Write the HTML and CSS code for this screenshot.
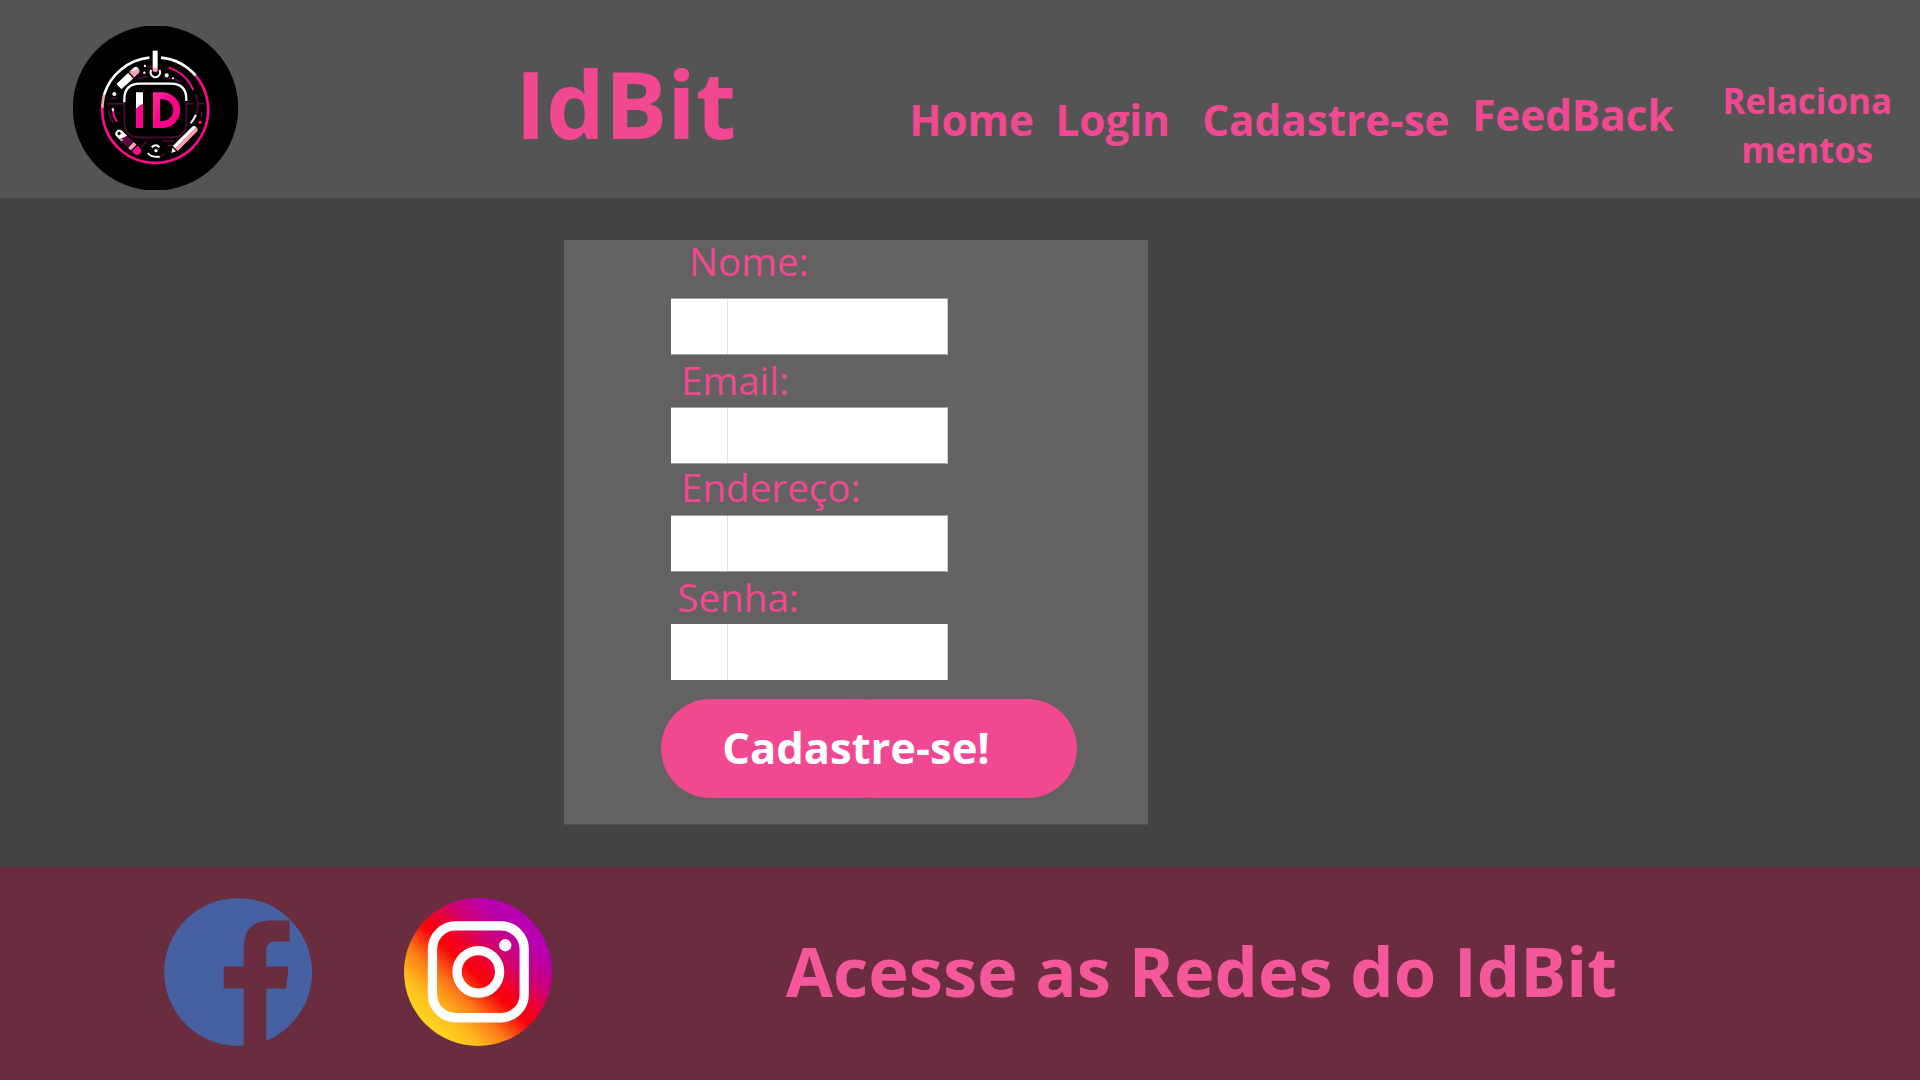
FILE: index.html
```
<!DOCTYPE html>
<html lang="pt-BR">
<head>
<meta charset="utf-8">
<title>IdBit</title>
<link rel="stylesheet" href="styles.css">
</head>
<body>
<header class="header">
  <svg class="logo" viewBox="39 33 495 495" aria-label="Logo IdBit">
    <defs>
      <linearGradient id="dee" x1="0" y1="0" x2="1" y2="1"><stop offset="0" stop-color="#ff2a9b"/><stop offset=".5" stop-color="#ff0088"/></linearGradient>
      <clipPath id="disc"><rect x="39" y="33" width="495" height="492"/></clipPath>
    </defs>
    <circle cx="286.500" cy="279" r="248" clip-path="url(#disc)"/>
    <g fill="none" stroke-width="8">
      <path d="M303 128A159 159 0 0 1 407 182" stroke="#fff"/>
      <path d="M407 182A159 159 0 1 1 127 275" stroke="#ff0a8c"/>
      <path d="M268 128A159 159 0 0 0 132 240" stroke="#fff"/>
      <path d="M132 240Q128 258 127 278" stroke="#ff9fb4"/>
      <path d="M326 158Q377 174 400 225" stroke="#ff0a8c" stroke-width="6"/>
      <path d="M159 278Q158 302 171 320" stroke="#ff0a8c" stroke-width="6"/>
      <path d="M157 280l3 8" stroke="#fff" stroke-width="6"/>
      <path d="M408 299Q403 312 392 325" stroke="#fff" stroke-width="6"/>
    </g>
    <g fill="none" stroke="#4a0c35" stroke-width="5">
      <path d="M193 262v58q0 47 47 47h92q47 0 47-47v-58M140 266h51M381 266h19M413 266h19M146 283q2 25 13 40M407 238q9 22 5 46q0 12-6 14M232 192q14-8 32-5M310 187q28 0 54 14M276 155h-15M152 250h20M156 237h8M308 378h32M322 391h16M245 395l16-16M293 428q16-2 20-13M425 292v16"/>
    </g>
    <path d="M193 262v-9q0-47 47-47h92q47 0 47 47v5" fill="none" stroke="#fff" stroke-width="7"/>
    <path d="M278 107h15v52h-15z" fill="#fff"/>
    <path d="M278 158h15v10q-7 6-15 0z" fill="#ff9fb4"/>
    <path d="M274 165a14 14 0 1 0 24 0" fill="none" stroke="#fff" stroke-width="6"/>
    <path d="M228 232h21v34l-21 16z" fill="#fff"/>
    <path d="M228 281q9-11 21-14v72h-21z" fill="#ff0088"/>
    <path d="M279 232h28a53.500 53.500 0 0 1 0 107h-28zM300 253v65h7a32.500 32.500 0 0 0 0-65z" fill="url(#dee)" fill-rule="evenodd"/>
    <g transform="translate(206 189) rotate(-43)">
      <path d="M-39-9q0-3 3-3h45v22h-45q-3 0-3-3z" fill="#fff"/>
      <path d="M13-12h16q12 0 12 11t-12 11h-16z" fill="#ff9fb4"/>
      <path d="M18-12h12q11 0 11 11l-14-3z" fill="#fff"/>
    </g>
    <g transform="translate(204 381) rotate(44)">
      <path d="M-15-12h-20q-13 0-13 12t13 12h20z" fill="#fff"/>
      <circle cx="-37" cy="0" r="5"/>
      <path d="M-15-12h25v24h-34z" fill="#5c0b41"/>
      <path d="M-15 3v9h-9z" fill="#ff9fb4"/>
      <path d="M12-12h12v24h-12z" fill="#ff9fb4"/>
      <path d="M28-12h10q12 0 12 12t-12 12h-10z" fill="#ff0a8c"/>
    </g>
    <g transform="translate(373 374) rotate(-45)">
      <path d="M-38-11h80q10 0 10 10h-90z" fill="#fff"/>
      <path d="M-38-1h90q0 11-10 11h-80z" fill="#ff9fb4"/>
      <path d="M-42-8v15l-14-6z" fill="#fff"/>
    </g>
    <path d="M275 397q13-12 23 0M263 414q11 14 36 11" fill="none" stroke="#fff" stroke-width="6"/>
    <g fill="#fff"><circle cx="288" cy="407" r="5"/><circle cx="163" cy="237" r="6"/><circle cx="320" cy="181" r="6"/><circle cx="339" cy="190" r="3"/><circle cx="255" cy="153" r="3.500"/><circle cx="253" cy="173" r="3.500"/></g>
    <circle cx="420" cy="322" r="5" fill="#ff0a8c"/>
  </svg>
  <h1 class="brand">IdBit</h1>
  <nav class="nav">
    <a class="link link-home">Home</a>
    <a class="link link-login">Login</a>
    <a class="link link-signup">Cadastre-se</a>
    <a class="link link-feedback">FeedBack</a>
    <a class="link link-relations">Relaciona<br>mentos</a>
  </nav>
</header>

<main class="main">
  <form class="card">
    <label class="label label-name">Nome:</label>
    <div class="field"><span class="field-start"></span></div>
    <label class="label label-email">Email:</label>
    <div class="field"><span class="field-start"></span></div>
    <label class="label label-address">Endereço:</label>
    <div class="field"><span class="field-start"></span></div>
    <label class="label label-password">Senha:</label>
    <div class="field field-last"><span class="field-start"></span></div>
    <button class="submit" type="button"><span class="submit-text">Cadastre-se!</span></button>
  </form>
</main>

<footer class="footer">
  <svg class="social" viewBox="42 53 444 445" aria-label="Facebook">
    <path fill="#4561a1" d="M281 497.500H252A222 222 0 0 1 42 275.500A222 222 0 0 1 264 53.500A222 222 0 0 1 419 116V121H356Q281 124 281 205V259H221V325H281ZM349 482V325H409L416 259H349V211Q349 184 378 184H419V117A222 222 0 0 1 349 482Z"/>
  </svg>
  <svg class="social social-instagram" viewBox="42 53 444 445" aria-label="Instagram">
    <defs>
      <linearGradient id="insta" gradientUnits="userSpaceOnUse" x1="115" y1="430" x2="405" y2="125">
        <stop offset="0" stop-color="#ffd41f"/><stop offset=".13" stop-color="#ffbd1e"/><stop offset=".3" stop-color="#fb7a18"/><stop offset=".48" stop-color="#f8040a"/><stop offset=".56" stop-color="#f5001c"/><stop offset=".72" stop-color="#d2006f"/><stop offset=".9" stop-color="#b900ac"/><stop offset="1" stop-color="#b800b3"/>
      </linearGradient>
    </defs>
    <circle cx="264" cy="275.500" r="222.500" fill="url(#insta)"/>
    <g fill="none" stroke="#fff" stroke-width="28"><rect x="127" y="137" width="276" height="276" rx="70"/><circle cx="265" cy="275" r="64"/></g>
    <circle cx="346" cy="195" r="18.500" fill="#fff"/>
  </svg>
  <p class="tagline">Acesse as Redes do IdBit</p>
</footer>
</body>
</html>
```
FILE: styles.css
```
* { box-sizing: border-box; }

body {
  margin: 0;
  width: 1920px;
  height: 1080px;
  overflow: hidden;
  display: flex;
  flex-direction: column;
  background: #444242;
  color: #f04991;
  font-family: "Open Sans", sans-serif;
}

/* Header */
.header {
  display: flex;
  align-items: flex-start;
  height: 198px;
  padding-left: 73px;
  background: #545454;
}
.logo {
  width: 165px;
  height: 165px;
  margin-top: 26px;
}
.brand {
  width: 394px;
  margin: 53px 0 0 277.200px;
  font-size: 93px;
  line-height: 100px;
  font-weight: 700;
}
.nav {
  display: flex;
  align-items: flex-start;
  padding-top: 90px;
  font-size: 42.200px;
  line-height: 60px;
  font-weight: 700;
  white-space: nowrap;
}
.link { flex: none; }
.link-home { width: 146.300px; }
.link-login { width: 146.700px; }
.link-signup { width: 270px; }
.link-feedback { width: 250.300px; margin-top: -5px; }
.link-relations {
  margin-top: -14px;
  font-size: 34.900px;
  line-height: 49px;
  text-align: center;
}

/* Sign-up form */
.main {
  height: 669px;
  padding: 42px 0 0 564px;
}
.card {
  display: flex;
  flex-direction: column;
  align-items: flex-start;
  width: 584px;
  height: 585px;
  padding: 3px 0 0 97px;
  background: #636161;
  border-bottom: 1px solid #524f50;
}
.label {
  font-size: 38.600px;
  line-height: 36px;
}
.label-name { margin: 0 0 19px 28px; }
.label-email { margin: 7px 0 9px 20px; }
.label-address { margin: 5px 0 10px 20px; }
.label-password { margin: 7px 0 9px 16.300px; }
.field {
  width: 277px;
  height: 57px;
  margin-left: 10px;
  background: #fff;
  border: solid #a3a2a2;
  border-width: 1px 1px 1px 0;
  border-right-color: #c9c9c9;
}
.field-last {
  height: 56px;
  border-width: 0 1px 0 0;
}
.field-start {
  display: block;
  width: 57px;
  height: 100%;
  border-right: 1px solid #e3e3e3;
}
.submit {
  position: relative;
  width: 416px;
  height: 99px;
  margin-top: 19px;
  padding: 0 0 2px 61.300px;
  border: 0;
  background: none;
  color: #fff;
  font: 700 43.500px/97px "Open Sans", sans-serif;
  text-align: left;
}
/* Two overlapping pills form the button */
.submit::before,
.submit::after {
  content: "";
  position: absolute;
  top: 0;
  width: 250px;
  height: 99px;
  border-radius: 49.500px;
  background: #f04991;
}
.submit::before { left: 0; }
.submit::after { right: 0; }
.submit-text {
  position: relative;
  z-index: 1;
}

/* Footer */
.footer {
  display: flex;
  align-items: flex-start;
  height: 213px;
  padding: 31px 0 0 164px;
  background: #6a2d3f;
}
.social {
  width: 148px;
  height: 148px;
}
.social-instagram { margin-left: 92px; }
.tagline {
  margin: 23px 0 0 233.700px;
  color: #f4589b;
  font-size: 68.600px;
  line-height: 100px;
  font-weight: 700;
  white-space: nowrap;
}
```
